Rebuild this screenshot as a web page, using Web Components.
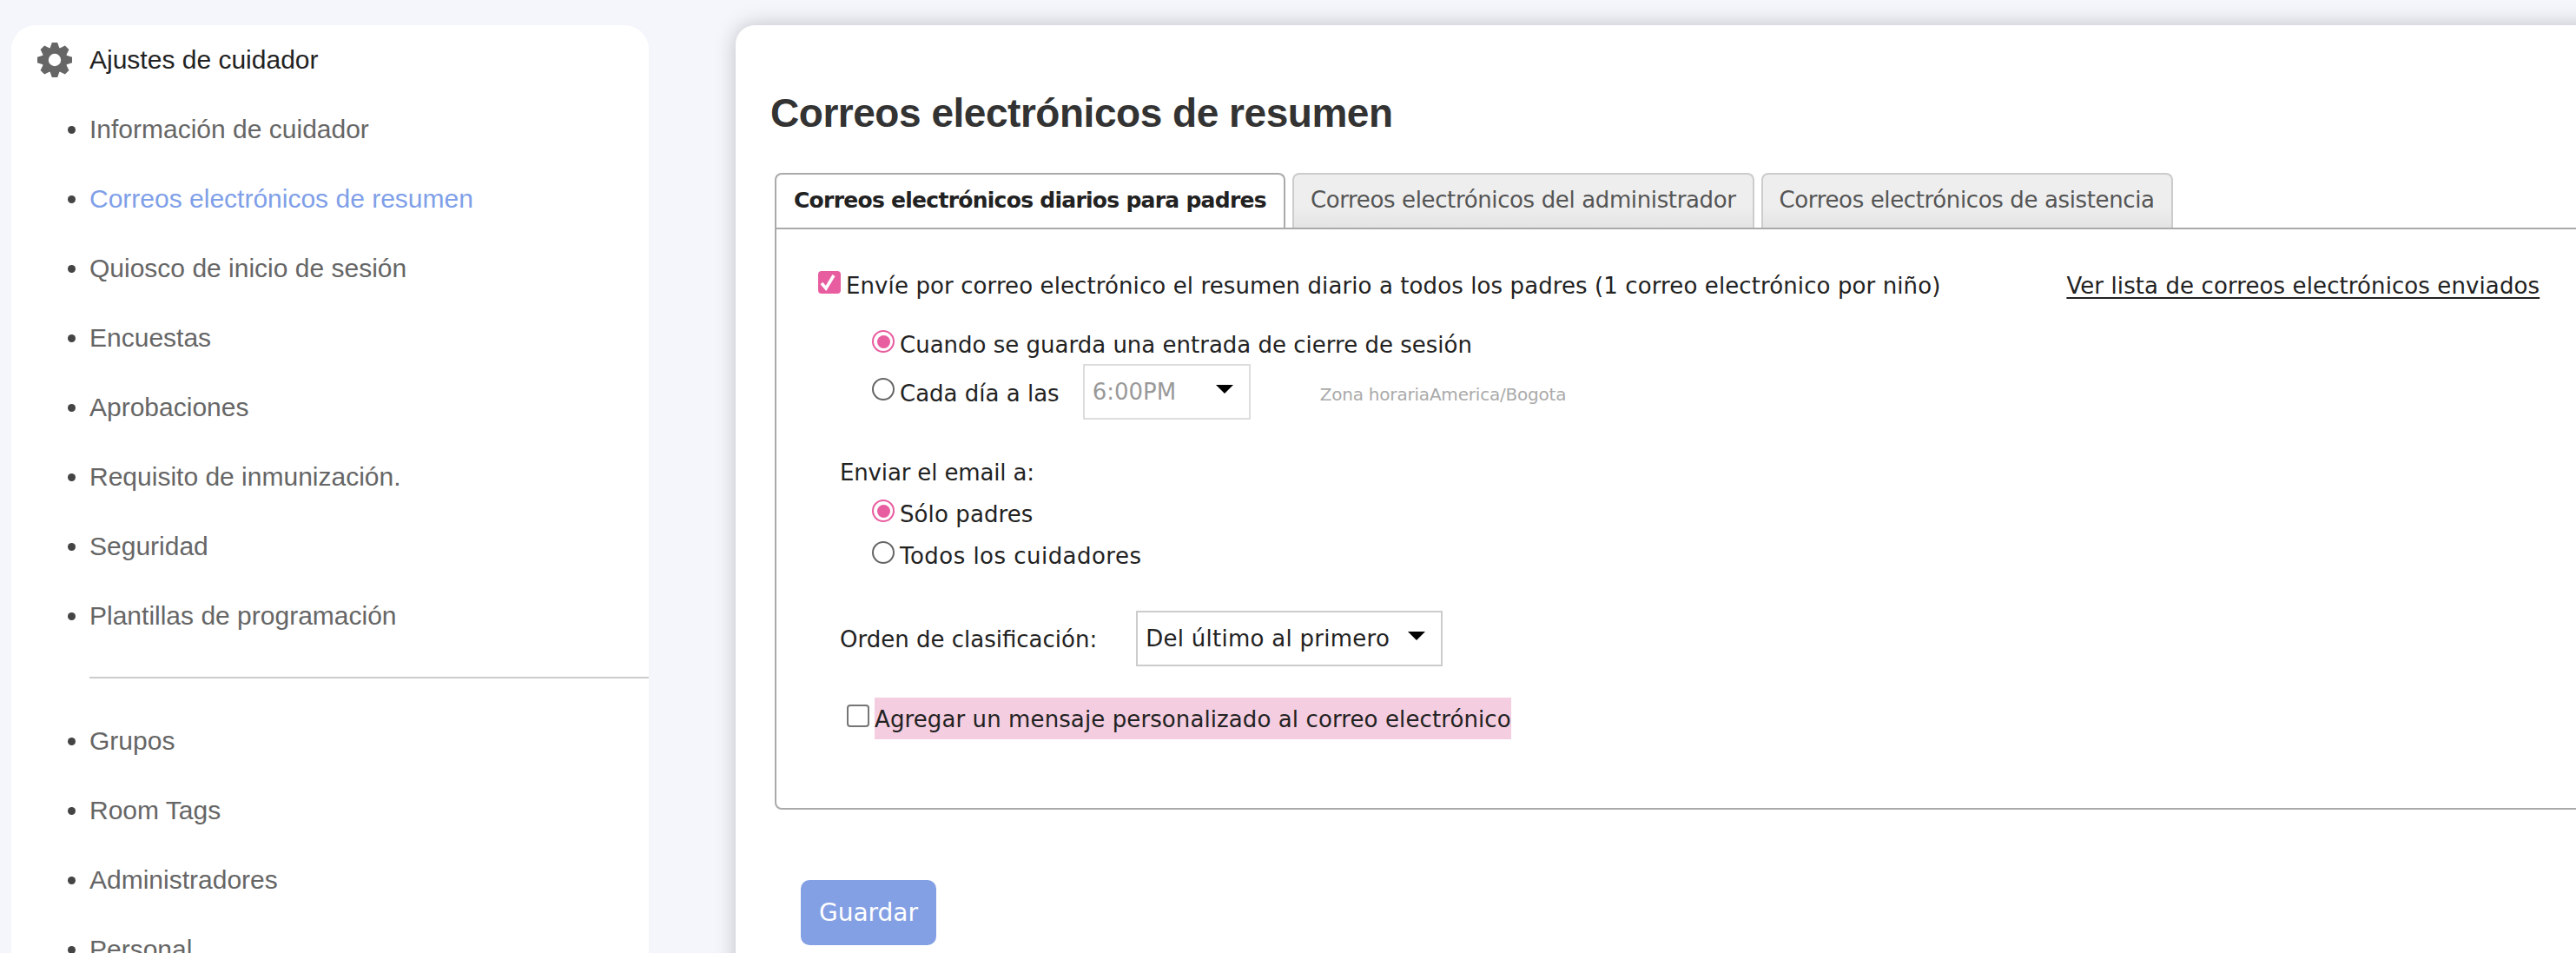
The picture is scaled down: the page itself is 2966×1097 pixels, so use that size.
<!doctype html>
<html>
<head>
<meta charset="utf-8">
<style>
html, body { margin: 0; height: 100%; overflow: hidden; background: #f4f6fb; }
</style>
</head>
<body>
<caregiver-settings>
	<settings-sidebar>
		<side-item header>Ajustes de cuidador</side-item>
		<side-item>Información de cuidador</side-item>
		<side-item active>Correos electrónicos de resumen</side-item>
		<side-item>Quiosco de inicio de sesión</side-item>
		<side-item>Encuestas</side-item>
		<side-item>Aprobaciones</side-item>
		<side-item>Requisito de inmunización.</side-item>
		<side-item>Seguridad</side-item>
		<side-item>Plantillas de programación</side-item>
		<side-divider></side-divider>
		<side-item>Grupos</side-item>
		<side-item>Room Tags</side-item>
		<side-item>Administradores</side-item>
		<side-item>Personal</side-item>
	</settings-sidebar>
	<summary-card>
		<tab-item slot="tabs" active>Correos electrónicos diarios para padres</tab-item>
		<tab-item slot="tabs">Correos electrónicos del administrador</tab-item>
		<tab-item slot="tabs">Correos electrónicos de asistencia</tab-item>
		<daily-form></daily-form>
	</summary-card>
</caregiver-settings>

<script>
class CaregiverSettings extends HTMLElement {
	constructor() {
		super()
		this.attachShadow({ mode: "open" }).innerHTML = `<style>
				:host {
					display: flex; align-items: flex-start; gap: 100px;
					height: 1097px; overflow: hidden;
					padding: 29px 0 0 13px; box-sizing: border-box;
					}
				</style>
			<slot></slot>`
		}
	static { customElements.define( "caregiver-settings", this ) }
	}

class SettingsSidebar extends HTMLElement {
	constructor() {
		super()
		this.attachShadow({ mode: "open" }).innerHTML = `<style>
				:host {
					display: block; flex: none;
					width: 734px; height: 1200px;
					background: #fff;
					border-radius: 28px 28px 0 0;
					}
				</style>
			<slot></slot>`
		}
	static { customElements.define( "settings-sidebar", this ) }
	}

class SideItem extends HTMLElement {
	constructor() {
		super()
		this.attachShadow({ mode: "open" }).innerHTML = `<style>
				:host {
					display: flex; align-items: center;
					height: 80px; padding-left: 65px;
					font: 30px "Liberation Sans", sans-serif;
					color: #666;
					}
				:host([active]) { color: #7f9fe8; }
				:host([header]) { color: #222; }
				#mark {
					flex: none; width: 9px; height: 9px; margin-right: 16px;
					border-radius: 50%; background: #444;
					}
				:host([header]) #mark { display: none; }
				svg { display: none; flex: none; width: 40px; height: 40px; margin: 0 20px 0 -35px; fill: #666; }
				:host([header]) svg { display: block; }
				</style>
			<svg viewBox="-20 -20 40 40">
				<circle r="14.5"/>
				<path id=tooth d="M-3.2 -20H3.2L5.6 -13V13L3.2 20H-3.2L-5.6 13V-13Z"/>
				<use href="#tooth" transform="rotate(45)"/>
				<use href="#tooth" transform="rotate(90)"/>
				<use href="#tooth" transform="rotate(135)"/>
				<circle r="7.2" fill="#fff"/>
			</svg>
			<span id=mark></span>
			<slot></slot>`
		}
	static { customElements.define( "side-item", this ) }
	}

class SideDivider extends HTMLElement {
	constructor() {
		super()
		this.attachShadow({ mode: "open" }).innerHTML = `<style>
				:host {
					display: block;
					height: 2px; margin: 30px 0 32px 90px;
					background: #ccc;
					}
				</style>`
		}
	static { customElements.define( "side-divider", this ) }
	}

class SummaryCard extends HTMLElement {
	constructor() {
		super()
		this.attachShadow({ mode: "open" }).innerHTML = `<style>
				:host {
					display: block; flex: none;
					width: 2300px; height: 1200px;
					background: #fff;
					border-radius: 22px 0 0 0;
					box-shadow: 0 0 24px rgba( 0, 0, 0, .22 );
					padding: 0 0 0 45px; box-sizing: border-box;
					}
				h1 {
					margin: 0 0 0 -5px; padding-top: 72px; height: 98px;
					font: bold 46px/58px "Liberation Sans", sans-serif;
					letter-spacing: -.47px;
					color: #333;
					}
				#tabs { display: flex; gap: 8px; height: 63px; }
				#panel {
					border: 2px solid #aaa;
					border-radius: 0 0 0 8px;
					}
				primary-button { margin: 81px 0 0 30px; }
				</style>
			<h1>Correos electrónicos de resumen</h1>
			<div id=tabs><slot name=tabs></slot></div>
			<div id=panel><slot></slot></div>
			<primary-button>Guardar</primary-button>`
		}
	static { customElements.define( "summary-card", this ) }
	}

class TabItem extends HTMLElement {
	constructor() {
		super()
		this.attachShadow({ mode: "open" }).innerHTML = `<style>
				:host {
					display: flex; align-items: center;
					padding: 0 19px 3px; height: 63px; box-sizing: border-box;
					border: 2px solid #ccc; border-bottom: 0;
					border-radius: 8px 8px 0 0;
					background: linear-gradient( #eee 60%, #e4e4e4 );
					font: 26px "DejaVu Sans", sans-serif;
					letter-spacing: -.37px;
					color: #555;
					}
				:host([active]) {
					padding: 0 20px 3px;
					border-color: #aaa;
					background: #fff;
					font-size: 25px; font-weight: bold;
					letter-spacing: -.73px;
					color: #222;
					}
				</style>
			<slot></slot>`
		}
	static { customElements.define( "tab-item", this ) }
	}

class PinkCheck extends HTMLElement {
	constructor() {
		super()
		this.attachShadow({ mode: "open" }).innerHTML = `<style>
				:host {
					display: block; flex: none;
					width: 26px; height: 26px; box-sizing: border-box;
					border: 2px solid #767676; border-radius: 4px;
					background: #fff;
					}
				:host([checked]) { border-color: #e85d9f; background: #e85d9f; }
				svg { display: none; width: 100%; height: 100%; }
				:host([checked]) svg { display: block; }
				</style>
			<svg viewBox="0 0 22 22"><path d="M2 12l5 6 9-15" fill="none" stroke="#fff" stroke-width="3.6"/></svg>`
		}
	static { customElements.define( "pink-check", this ) }
	}

class PinkRadio extends HTMLElement {
	constructor() {
		super()
		this.attachShadow({ mode: "open" }).innerHTML = `<style>
				:host {
					display: flex; place-content: center; align-items: center; flex: none;
					width: 26px; height: 26px; box-sizing: border-box;
					border: 2px solid #666; border-radius: 50%;
					background: #fff;
					}
				:host([checked]) { border-color: #e85d9f; }
				#dot { display: none; width: 15px; height: 15px; border-radius: 50%; background: #e85d9f; }
				:host([checked]) #dot { display: block; }
				</style>
			<span id=dot></span>`
		}
	static { customElements.define( "pink-radio", this ) }
	}

class FakeSelect extends HTMLElement {
	constructor() {
		super()
		this.attachShadow({ mode: "open" }).innerHTML = `<style>
				:host {
					display: flex; align-items: center; justify-content: space-between; flex: none;
					height: 64px; box-sizing: border-box; padding: 0 18px 0 9px;
					border: 2px solid #ccc;
					background: #fff;
					color: #222;
					}
				:host([disabled]) { border-color: #ddd; color: #999; }
				i { width: 0; height: 0; border: 10px solid transparent; border-top: 10px solid #000; border-bottom: 0; margin-bottom: 6px; }
				</style>
			<slot></slot><i></i>`
		}
	static { customElements.define( "fake-select", this ) }
	}

class PrimaryButton extends HTMLElement {
	constructor() {
		super()
		this.attachShadow({ mode: "open" }).innerHTML = `<style>
				:host {
					display: flex; align-items: center; justify-content: center;
					width: 156px; height: 75px;
					background: #84a0e4;
					border-radius: 10px;
					font: 28px "DejaVu Sans", sans-serif;
					color: #fff;
					}
				</style>
			<slot></slot>`
		}
	static { customElements.define( "primary-button", this ) }
	}

class DailyForm extends HTMLElement {
	constructor() {
		super()
		this.attachShadow({ mode: "open" }).innerHTML = `<style>
				:host {
					display: block;
					padding: 44px 0 79px 48px;
					font: 26px "DejaVu Sans", sans-serif;
					letter-spacing: .1px;
					color: #222;
					}
				.row { display: flex; align-items: center; height: 40px; }
				.row pink-check, .row pink-radio { margin-bottom: 6px; margin-right: 6px; }
				.row > span { padding-top: 1px; }
				.opt { margin-left: 62px; }
				.label { margin-left: 25px; }
				.flat { letter-spacing: 0; }
				a { margin-left: 145px; color: #222; text-decoration: underline; text-underline-offset: 4px; padding-top: 1px; }
				small { margin-left: 80px; font-size: 20px; letter-spacing: -.2px; color: #aaa; padding-top: 6px; }
				.mark { background: #f4cde0; height: 48px; box-sizing: border-box; display: flex; align-items: center; padding-top: 0; }
				</style>
			<div class=row>
				<pink-check checked></pink-check>
				<span>Envíe por correo electrónico el resumen diario a todos los padres (1 correo electrónico por niño)</span>
				<a>Ver lista de correos electrónicos enviados</a>
			</div>
			<div class="row opt flat" style="margin-top:28px"><pink-radio checked></pink-radio><span>Cuando se guarda una entrada de cierre de sesión</span></div>
			<div class="row opt flat" style="margin-top:3px;height:64px">
				<pink-radio></pink-radio><span style="padding-top:4px">Cada día a las</span>
				<fake-select disabled style="width:193px;margin-left:27px">6:00PM</fake-select>
				<small>Zona horariaAmerica/Bogota</small>
			</div>
			<div class="row label" style="margin-top:40px;letter-spacing:-.15px"><span>Enviar el email a:</span></div>
			<div class="row opt" style="margin-top:8px"><pink-radio checked></pink-radio><span>Sólo padres</span></div>
			<div class="row opt" style="margin-top:8px;letter-spacing:.47px"><pink-radio></pink-radio><span>Todos los cuidadores</span></div>
			<div class="row label flat" style="margin-top:44px;height:64px">
				<span>Orden de clasificación:</span>
				<fake-select style="width:353px;margin-left:45px;letter-spacing:.27px">Del último al primero</fake-select>
			</div>
			<div class="row" style="margin:36px 0 0 33px;height:48px">
				<pink-check></pink-check><span class=mark>Agregar un mensaje personalizado al correo electrónico</span>
			</div>`
		}
	static { customElements.define( "daily-form", this ) }
	}
</script>
</body>
</html>
